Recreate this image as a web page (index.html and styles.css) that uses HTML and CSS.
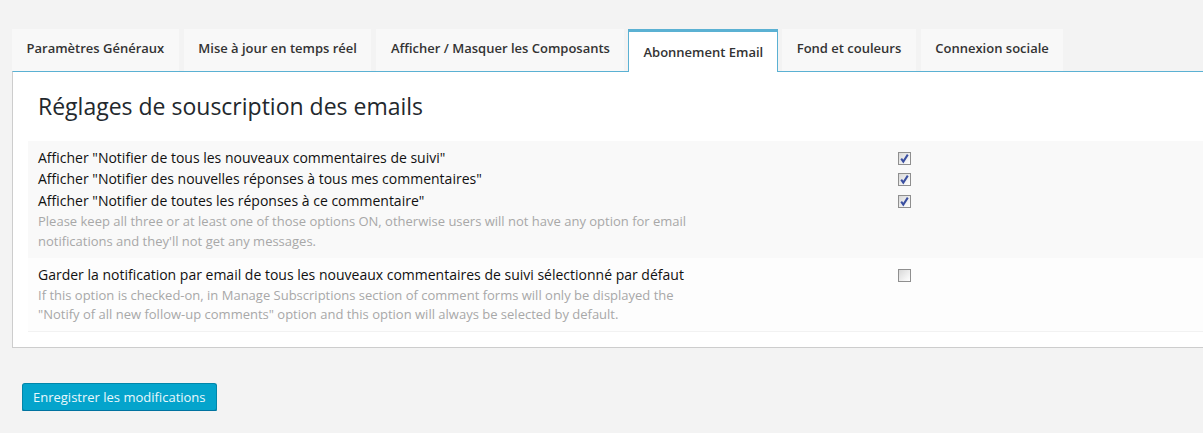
FILE: index.html
```html
<!DOCTYPE html>
<html lang="fr">
<head>
<meta charset="utf-8">
<title>Abonnement Email</title>
<link rel="stylesheet" href="styles.css">
</head>
<body>
<div class="wrap">
  <nav class="tabs">
    <a class="tab">Paramètres Généraux</a>
    <a class="tab">Mise à jour en temps réel</a>
    <a class="tab">Afficher / Masquer les Composants</a>
    <a class="tab active">Abonnement Email</a>
    <a class="tab">Fond et couleurs</a>
    <a class="tab">Connexion sociale</a>
  </nav>
  <section class="panel">
    <h2 class="title">Réglages de souscription des emails</h2>
    <div class="row row-alt">
      <div class="label">Afficher "Notifier de tous les nouveaux commentaires de suivi"</div>
      <div class="cbcell"><span class="cb checked"><svg viewBox="0 0 11 11" width="11" height="11"><path d="M2.2 5.6 L4.3 8.6 L8.8 1.6" fill="none" stroke="#3a4fa0" stroke-width="2"/></svg></span></div>
      <div class="label">Afficher "Notifier des nouvelles réponses à tous mes commentaires"</div>
      <div class="cbcell"><span class="cb checked"><svg viewBox="0 0 11 11" width="11" height="11"><path d="M2.2 5.6 L4.3 8.6 L8.8 1.6" fill="none" stroke="#3a4fa0" stroke-width="2"/></svg></span></div>
      <div class="label l3">Afficher "Notifier de toutes les réponses à ce commentaire"</div>
      <div class="cbcell l3"><span class="cb checked"><svg viewBox="0 0 11 11" width="11" height="11"><path d="M2.2 5.6 L4.3 8.6 L8.8 1.6" fill="none" stroke="#3a4fa0" stroke-width="2"/></svg></span></div>
      <p class="desc">Please keep all three or at least one of those options ON, otherwise users will not have any option for email notifications and they'll not get any messages.</p>
    </div>
    <div class="row row-plain">
      <div class="label">Garder la notification par email de tous les nouveaux commentaires de suivi sélectionné par défaut</div>
      <div class="cbcell"><span class="cb"></span></div>
      <p class="desc narrow">If this option is checked-on, in Manage Subscriptions section of comment forms will only be displayed the "Notify of all new follow-up comments" option and this option will always be selected by default.</p>
    </div>
  </section>
  <div class="actions">
    <button class="btn" type="button">Enregistrer les modifications</button>
  </div>
</div>
</body>
</html>
```

FILE: styles.css
```css
html, body {
  margin: 0;
  padding: 0;
  background: #f3f3f3;
  font-family: "Open Sans", "Noto Sans", sans-serif;
  overflow: hidden;
}

.wrap {
  padding: 29px 0 0 12px;
}

.tabs {
  display: flex;
  gap: 5px;
  align-items: flex-start;
  position: relative;
  z-index: 1;
}

.tab {
  box-sizing: border-box;
  height: 42px;
  padding: 9px 14.5px 0;
  background: #f8f8f8;
  color: #333;
  font-size: 13px;
  font-weight: 600;
  line-height: 20px;
  white-space: nowrap;
}

.tab.active {
  height: 43px;
  margin-bottom: -1px;
  padding: 10px 14px 0;
  background: #fff;
  border-top: 3px solid #5bb1d3;
  border-left: 1px solid #5bb1d3;
  border-right: 1px solid #5bb1d3;
  margin-left: -1px;
  margin-right: -1px;
}

.panel {
  background: #fff;
  border-top: 1px solid #5bb1d3;
  border-left: 1px solid #cdcdcd;
  border-bottom: 1px solid #cdcdcd;
  padding: 0 0 15px 15px;
}

.title {
  margin: 0;
  padding: 19px 10px 19px;
  font-size: 23px;
  font-weight: 400;
  line-height: 31px;
  color: #23282d;
}

.row {
  display: grid;
  grid-template-columns: 860px 1fr;
  padding: 6px 10px 7px;
  border-bottom: 1px solid #f2f2f2;
}

.row-alt {
  background: #f9f9f9;
  border-bottom: none;
}

.row-plain {
  background: #fdfdfd;
  padding-top: 6px;
  padding-bottom: 7px;
}

.label {
  font-size: 14px;
  line-height: 21px;
  color: #111;
  white-space: nowrap;
}

.label.l3, .cbcell.l3 {
  margin-top: 1px;
}

.cbcell {
  display: flex;
  align-items: center;
  height: 21px;
}

.cb {
  box-sizing: border-box;
  width: 13px;
  height: 13px;
  border: 1px solid #8f8f8f;
  background: linear-gradient(135deg, #d8d8d8 0%, #f4f4f4 70%, #fff 100%);
  display: flex;
  align-items: center;
  justify-content: center;
  margin-top: 1px;
}

.cb svg {
  display: block;
}

.desc {
  grid-column: 1 / 2;
  margin: 0;
  max-width: 665px;
  font-size: 13px;
  line-height: 20px;
  color: #a8a8a8;
}

.desc.narrow {
  max-width: 650px;
  line-height: 19px;
  margin-top: 1px;
}

.actions {
  padding: 35px 0 0 10px;
}

.btn {
  box-sizing: border-box;
  height: 28px;
  padding: 0 10px;
  background: #04a4cc;
  border: 1px solid #0086aa;
  border-bottom-color: #0073a0;
  border-radius: 3px;
  box-shadow: 0 1px 0 #0a7fa0;
  color: #e9f8fc;
  font-family: "Open Sans", "Noto Sans", sans-serif;
  font-size: 13px;
  line-height: 26px;
  cursor: pointer;
}
```
